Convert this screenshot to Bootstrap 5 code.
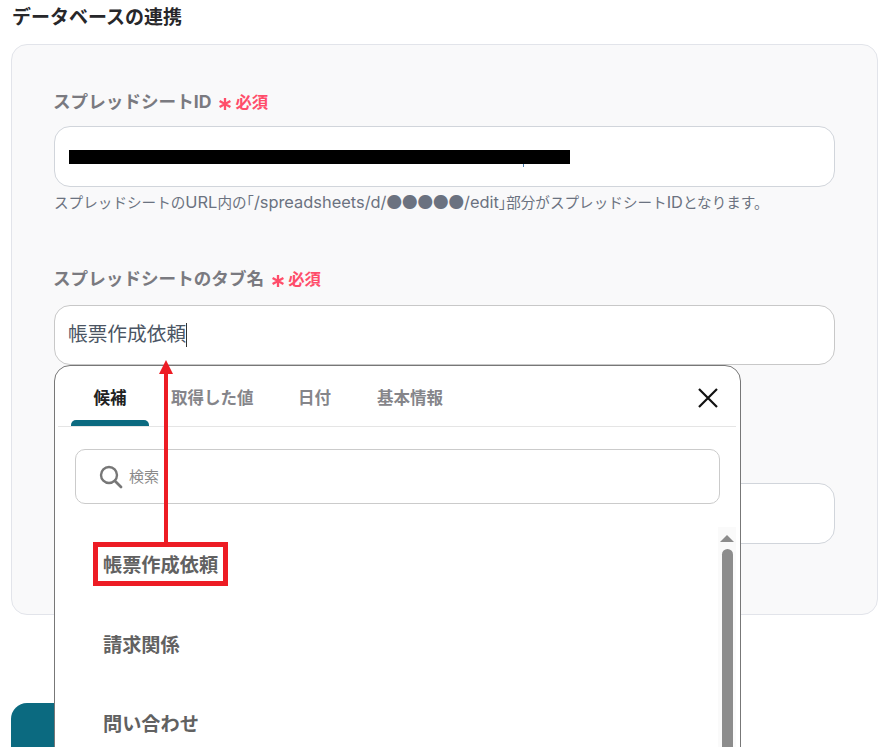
<!DOCTYPE html>
<html lang="ja">
<head>
<meta charset="utf-8">
<title>データベースの連携</title>
<link href="https://cdn.jsdelivr.net/npm/bootstrap@5.3.0/dist/css/bootstrap.min.css" rel="stylesheet">
<style>
html,body{height:747px;overflow:hidden}
body{font-family:Inter,"Noto Sans CJK JP",sans-serif;background:#fff;position:relative;color:#333}
.page-title{font-size:19px;font-weight:700;line-height:26px;color:#27272a;padding:5px 0 0 12px;margin:0 0 13px}
.panel{margin:0 10px 0 11px;height:571px;background:#f9f9fa;border:1px solid #e2e4ea;border-radius:16px;padding:44px 42px 0 42px}
.fld-label{font-size:17.6px;font-weight:700;color:#7a7a80;line-height:26px;display:flex;align-items:center;margin:0 0 11px -1px}
.req{color:#ff4d6a;font-size:16.4px;font-weight:700;display:inline-flex;align-items:center;margin-left:7px}
.req svg{margin-right:3px;margin-top:4px}
.fake-input{height:61px;background:#fff;border:1px solid #d1d5db;border-radius:16px;padding:0 14px;display:flex;align-items:center;font-size:19.7px;color:#4b5563}
.redact{width:501px;height:14px;background:#000;position:relative}
.redact::after{content:"";position:absolute;left:454px;top:14px;width:1px;height:3px;background:#4a7fb0}
.help{font-size:14.6px;line-height:20px;color:#6b7280;margin:6px 0 0;white-space:nowrap}
.ltn{font-size:16.4px;line-height:1}
.dots{font-size:15.5px;line-height:1;font-family:"Noto Sans CJK JP",sans-serif}
.fld2{margin-top:53px}
.fld2 .fld-label{margin-bottom:13px}
.fld2 .fake-input{height:60px;border-color:#c8c8c8;padding-left:13px}
.caret{display:inline-block;width:1px;height:24px;background:#333}
.fld3{margin-top:118px}
.cta{position:absolute;left:11px;top:703px;width:300px;height:70px;background:#0b6a80;border-radius:16px}
.popup{position:absolute;left:54px;top:365px;width:687px;height:420px;background:#fff;border:1px solid #777;border-radius:16px;overflow:hidden}
.tabs{height:61px;margin:0 4px 0 3px;border-bottom:1px solid #e5e5e5;padding-left:13px;display:flex;align-items:stretch}
.tabx{width:78px;margin-right:22px;font-size:16.5px;font-weight:700;color:#85858a;text-align:center;line-height:65px;position:relative;white-space:nowrap}
.tabx.on{color:#222}
.tabx.on::after{content:"";position:absolute;left:0;right:0;bottom:0;height:6px;background:#0b6a80;border-radius:5px 5px 0 0}
.tabs .tabx:nth-child(2){width:82px;margin-right:45px}
.tabs .tabx:nth-child(3){width:33px;margin-right:45px}
.tabs .tabx:nth-child(4){width:68px}
.closer{margin-left:auto;margin-right:18px;align-self:center;margin-top:4px;line-height:0}
.searchbox{margin:22px 20px 0 20px;height:55px;border:1px solid #cbcbcb;border-radius:10px;display:flex;align-items:center;padding-left:23px;color:#8a8a8a;font-size:15px}
.searchbox svg{margin-right:6px}
.searchbox span{margin-top:2px}
.itemlist{margin:27px 0 0 0;padding:0 0 0 48px;list-style:none}
.itemlist li{font-size:19.2px;font-weight:700;color:#616161;line-height:28px;height:79.5px;padding-top:20px}
.sbar{position:absolute;right:4px;top:161px;width:18px;height:260px;background:#fafafa}
.sbar i{display:block;width:0;height:0;margin:8px auto 0;border-left:7px solid transparent;border-right:7px solid transparent;border-bottom:7px solid #8c8c8c}
.sbar b{display:block;width:11px;height:240px;margin:7px auto 0;background:#8c8c8c;border-radius:6px}
.mark-box{position:absolute;left:93px;top:542px;width:135px;height:44px;border:5px solid #ed1c24}
.arrow-line{position:absolute;left:164px;top:372px;width:4px;height:171px;background:#ed1c24}
.arrow-head{position:absolute;left:159px;top:360px;width:0;height:0;border-left:7px solid transparent;border-right:7px solid transparent;border-bottom:14px solid #ed1c24}
</style>
</head>
<body>
<h1 class="page-title">データベースの連携</h1>
<div class="panel">
  <div class="fld-label">スプレッドシートID<span class="req"><svg width="14" height="14" viewBox="0 0 14 14"><path d="M7 1v12M1.6 3.9l10.8 6.2M12.4 3.9L1.6 10.1" stroke="#ff4d6a" stroke-width="2.3"/></svg>必須</span></div>
  <div class="fake-input"><div class="redact"></div></div>
  <p class="help">スプレッドシートの<span class="ltn">URL</span>内の｢<span class="ltn">/spreadsheets/d/</span><span class="dots">●●●●●</span><span class="ltn">/edit</span>｣部分がスプレッドシート<span class="ltn">ID</span>となります。</p>
  <div class="fld2">
    <div class="fld-label">スプレッドシートのタブ名<span class="req"><svg width="14" height="14" viewBox="0 0 14 14"><path d="M7 1v12M1.6 3.9l10.8 6.2M12.4 3.9L1.6 10.1" stroke="#ff4d6a" stroke-width="2.3"/></svg>必須</span></div>
    <div class="fake-input">帳票作成依頼<span class="caret"></span></div>
  </div>
  <div class="fld3"><div class="fake-input"></div></div>
</div>
<div class="cta"></div>
<div class="popup">
  <div class="tabs">
    <div class="tabx on">候補</div>
    <div class="tabx">取得した値</div>
    <div class="tabx">日付</div>
    <div class="tabx">基本情報</div>
    <div class="closer"><svg width="20" height="20" viewBox="0 0 20 20"><path d="M1 1l18 18M19 1L1 19" stroke="#111" stroke-width="2.2"/></svg></div>
  </div>
  <div class="searchbox"><svg width="24" height="24" viewBox="0 0 24 24" fill="none"><circle cx="10" cy="10" r="8" stroke="#777" stroke-width="2.4"/><path d="M16 16l6 6" stroke="#777" stroke-width="2.8" stroke-linecap="round"/></svg><span>検索</span></div>
  <ul class="itemlist">
    <li>帳票作成依頼</li>
    <li>請求関係</li>
    <li>問い合わせ</li>
  </ul>
  <div class="sbar"><i></i><b></b></div>
</div>
<div class="mark-box"></div>
<div class="arrow-line"></div>
<div class="arrow-head"></div>
<script src="https://cdn.jsdelivr.net/npm/bootstrap@5.3.0/dist/js/bootstrap.bundle.min.js"></script>
</body>
</html>
